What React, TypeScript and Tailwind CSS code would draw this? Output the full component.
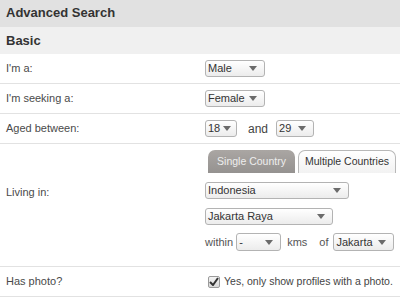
import React from "react";

function Arrow() {
  return (
    <svg width="8" height="5" viewBox="0 0 8 5" className="ml-[3px] shrink-0">
      <path d="M0 0 L8 0 L4 5 Z" fill="#6b6b6b" />
    </svg>
  );
}

function Select({ value, className }: { value: string; className: string }) {
  return (
    <div
      className={`flex h-[17px] shrink-0 items-center justify-between overflow-hidden whitespace-nowrap rounded-[3px] border border-[#b3b3b3] bg-gradient-to-b from-white to-[#ececec] pl-[2px] pr-[7px] text-[11px] leading-none text-[#333] ${className}`}
    >
      <span>{value}</span>
      <Arrow />
    </div>
  );
}

function Row({ label, children }: { label: string; children: React.ReactNode }) {
  return (
    <div className="flex h-[30px] items-center border-b border-[#e2e2e2]">
      <div className="w-[205px] shrink-0 pl-[6px] text-[11px] text-[#4a4a4a]">{label}</div>
      <div className="flex items-center whitespace-nowrap">{children}</div>
    </div>
  );
}

export default function App() {
  return (
    <div className="h-[300px] w-[400px] overflow-hidden bg-white font-['Liberation_Sans',Arial,sans-serif]">
      <div className="h-[27px] bg-[#e1e1e1] pl-[6px] pt-[3px] text-[13px] font-bold text-[#333]">
        Advanced Search
      </div>
      <div className="flex h-[27px] items-center bg-[#f0f0f0] pl-[6px] text-[13px] font-bold text-[#333]">
        Basic
      </div>

      <Row label="I'm a:">
        <Select value="Male" className="w-[60px]" />
      </Row>
      <Row label="I'm seeking a:">
        <Select value="Female" className="w-[60px]" />
      </Row>
      <Row label="Aged between:">
        <Select value="18" className="w-[32px]" />
        <span className="ml-[11px] mr-[8px] text-[12px] text-[#444]">and</span>
        <Select value="29" className="w-[38px]" />
      </Row>

      <div className="flex h-[123px] border-b border-[#e2e2e2]">
        <div className="w-[205px] shrink-0 pl-[6px] pt-[40px] text-[11px] text-[#4a4a4a]">Living in:</div>
        <div className="flex flex-1 flex-col items-start pt-[6px]">
          <div className="flex items-end gap-[3px] pl-[3px]">
            <div className="flex h-[23px] w-[87px] items-center justify-center whitespace-nowrap rounded-t-[7px] bg-gradient-to-b from-[#aaa6a3] to-[#959290] text-[10.5px] text-[#eeeeee]">
              Single Country
            </div>
            <div className="flex h-[23px] w-[98px] items-center justify-center whitespace-nowrap rounded-t-[7px] border border-b-0 border-[#b8b8b8] bg-gradient-to-b from-white to-[#f2f2f2] text-[10.5px] text-[#333]">
              Multiple Countries
            </div>
          </div>
          <Select value="Indonesia" className="mt-[9px] w-[144px]" />
          <Select value="Jakarta Raya" className="mt-[9px] w-[128px]" />
          <div className="mt-[8px] flex items-center whitespace-nowrap text-[11px] text-[#555]">
            <span className="mr-[3px]">within</span>
            <Select value="-" className="h-[18px] w-[45px]" />
            <span className="ml-[6px]">kms</span>
            <span className="ml-[12px] mr-[5px]">of</span>
            <Select value="Jakarta" className="h-[18px] w-[61px]" />
          </div>
        </div>
      </div>

      <Row label="Has photo?">
        <div className="ml-[3px] flex items-center">
          <div className="flex h-[12px] w-[12px] shrink-0 items-center justify-center rounded-[2px] border border-[#9a9a9a] bg-gradient-to-b from-[#f4f4f4] to-[#d8d8d8]">
            <svg width="10" height="9" viewBox="0 0 10 9">
              <path d="M1 5 L4 8 L9 1" fill="none" stroke="#333" strokeWidth="2" />
            </svg>
          </div>
          <span className="ml-[4px] text-[10.5px] text-[#444]">Yes, only show profiles with a photo.</span>
        </div>
      </Row>
    </div>
  );
}
